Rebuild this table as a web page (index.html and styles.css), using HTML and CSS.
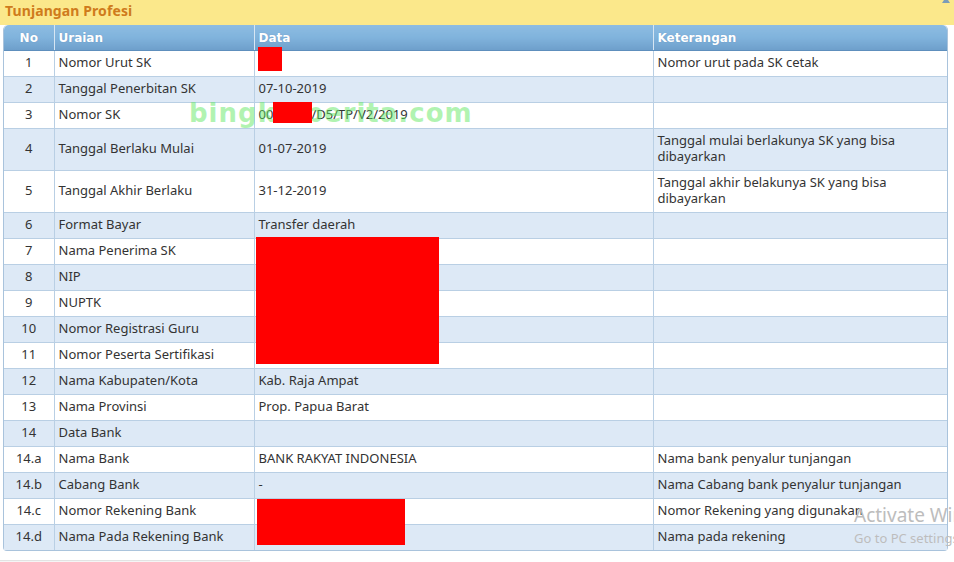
FILE: index.html
```html
<!DOCTYPE html>
<html>
<head>
<meta charset="utf-8">
<link rel="stylesheet" href="styles.css">
</head>
<body>
<div class="panel-head">
  <span class="panel-title">Tunjangan Profesi</span>
  <span class="collapse-icon"></span>
</div>
<div class="table-wrap">
  <table class="grid">
    <colgroup>
      <col class="c-no"><col class="c-ur"><col class="c-data"><col class="c-ket">
    </colgroup>
    <thead>
      <tr><th class="no">No</th><th>Uraian</th><th>Data</th><th>Keterangan</th></tr>
    </thead>
    <tbody>
      <tr><td class="no">1</td><td>Nomor Urut SK</td><td></td><td>Nomor urut pada SK cetak</td></tr>
      <tr><td class="no">2</td><td>Tanggal Penerbitan SK</td><td>07-10-2019</td><td></td></tr>
      <tr><td class="no">3</td><td>Nomor SK</td><td>00<span class="gap"></span>/D5/TP/V2/2019</td><td></td></tr>
      <tr><td class="no">4</td><td>Tanggal Berlaku Mulai</td><td>01-07-2019</td><td>Tanggal mulai berlakunya SK yang bisa dibayarkan</td></tr>
      <tr><td class="no">5</td><td>Tanggal Akhir Berlaku</td><td>31-12-2019</td><td>Tanggal akhir belakunya SK yang bisa dibayarkan</td></tr>
      <tr><td class="no">6</td><td>Format Bayar</td><td>Transfer daerah</td><td></td></tr>
      <tr><td class="no">7</td><td>Nama Penerima SK</td><td></td><td></td></tr>
      <tr><td class="no">8</td><td>NIP</td><td></td><td></td></tr>
      <tr><td class="no">9</td><td>NUPTK</td><td></td><td></td></tr>
      <tr><td class="no">10</td><td>Nomor Registrasi Guru</td><td></td><td></td></tr>
      <tr><td class="no">11</td><td>Nomor Peserta Sertifikasi</td><td></td><td></td></tr>
      <tr><td class="no">12</td><td>Nama Kabupaten/Kota</td><td>Kab. Raja Ampat</td><td></td></tr>
      <tr><td class="no">13</td><td>Nama Provinsi</td><td>Prop. Papua Barat</td><td></td></tr>
      <tr><td class="no">14</td><td>Data Bank</td><td></td><td></td></tr>
      <tr><td class="no">14.a</td><td>Nama Bank</td><td>BANK RAKYAT INDONESIA</td><td>Nama bank penyalur tunjangan</td></tr>
      <tr><td class="no">14.b</td><td>Cabang Bank</td><td>-</td><td>Nama Cabang bank penyalur tunjangan</td></tr>
      <tr><td class="no">14.c</td><td>Nomor Rekening Bank</td><td></td><td>Nomor Rekening yang digunakan</td></tr>
      <tr><td class="no">14.d</td><td>Nama Pada Rekening Bank</td><td></td><td>Nama pada rekening</td></tr>
    </tbody>
  </table>
  <div class="watermark">bingkaiberita.com</div>
  <div class="redact r1"></div>
  <div class="redact r2"></div>
  <div class="redact r3"></div>
  <div class="redact r4"></div>
</div>
<div class="footer-line"></div>
<div class="activate">
  <div class="act-1">Activate Windows</div>
  <div class="act-2">Go to PC settings to activate Windows.</div>
</div>
</body>
</html>
```
FILE: styles.css
```css
html, body {
  margin: 0;
  padding: 0;
  background: #ffffff;
  overflow: hidden;
  width: 954px;
  height: 562px;
}
body {
  position: relative;
  font-family: "Noto Sans", "DejaVu Sans", sans-serif;
  font-size: 13px;
  color: #333333;
}
.panel-head {
  height: 25px;
  background: #fbe88b;
  position: relative;
  display: flex;
  align-items: center;
  padding-left: 5px;
}
.panel-title {
  font-family: "Noto Sans", sans-serif;
  font-weight: 700;
  font-size: 14px;
  color: #cf7b1c;
  letter-spacing: 0.1px;
  margin-top: -4px;
}
.collapse-icon {
  position: absolute;
  right: 4px;
  top: -3px;
  width: 0;
  height: 0;
  border-left: 4px solid transparent;
  border-right: 4px solid transparent;
  border-bottom: 6px solid #7b9cb8;
}
.table-wrap {
  position: relative;
  margin-left: 3px;
  width: 943px;
  border: 1px solid #a9c3dc;
  border-top: none;
  border-radius: 5px 5px 4px 4px;
}
.grid {
  width: 943px;
  table-layout: fixed;
  border-collapse: collapse;
}
.c-no { width: 50px; }
.c-ur { width: 200px; }
.c-data { width: 399px; }
.c-ket { width: 294px; }
.grid th {
  height: 25px;
  padding: 0 4px;
  text-align: left;
  font-family: "DejaVu Sans", sans-serif;
  font-weight: 700;
  font-size: 12px;
  color: #ffffff;
  background: linear-gradient(#8dbce2 0%, #80b3dc 50%, #6e9fcb 100%);
  border-left: 1px solid #d7e6f3;
  border-bottom: 1px solid #5e8fbd;
  text-shadow: 0 0 1px rgba(60, 100, 150, 0.4);
}
.grid th:first-child {
  border-left: none;
  border-top-left-radius: 5px;
}
.grid th:last-child {
  border-top-right-radius: 5px;
}
.grid th.no { text-align: center; }
.grid td {
  padding: 3px 4px 6px 4px;
  line-height: 16px;
  vertical-align: middle;
  border-left: 1px solid #b9cfe4;
  border-bottom: 1px solid #b9cfe4;
}
.grid td:first-child { border-left: none; }
.grid tbody tr:last-child td { border-bottom: none; }
.grid td.no { text-align: center; }
.grid tbody tr:nth-child(even) td { background: #dde9f6; }
.grid tbody tr:nth-child(odd) td { background: #ffffff; }
.gap {
  display: inline-block;
  width: 38px;
}
.watermark {
  position: absolute;
  left: 185px;
  top: 73px;
  font-family: "DejaVu Sans", sans-serif;
  font-weight: 700;
  font-size: 26px;
  letter-spacing: 1px;
  color: rgba(100, 232, 100, 0.5);
  pointer-events: none;
}
.redact {
  position: absolute;
  background: #ff0000;
}
.r1 { left: 254px; top: 22px; width: 24px; height: 24px; }
.r2 { left: 269px; top: 77px; width: 39px; height: 21px; }
.r3 { left: 252px; top: 212px; width: 183px; height: 127px; }
.r4 { left: 253px; top: 474px; width: 148px; height: 46px; }
.footer-line {
  margin-top: 9px;
  width: 250px;
  height: 2px;
  border-top: 1px solid #e3e3e3;
  background: #f5f5f5;
}
.activate {
  position: absolute;
  left: 854px;
  top: 504px;
  white-space: nowrap;
  color: #bdbdbd;
  font-family: "Noto Sans", sans-serif;
}
.act-1 {
  font-size: 19px;
  line-height: 23px;
}
.act-2 {
  font-size: 13px;
  line-height: 18px;
  margin-top: 2px;
}
```
